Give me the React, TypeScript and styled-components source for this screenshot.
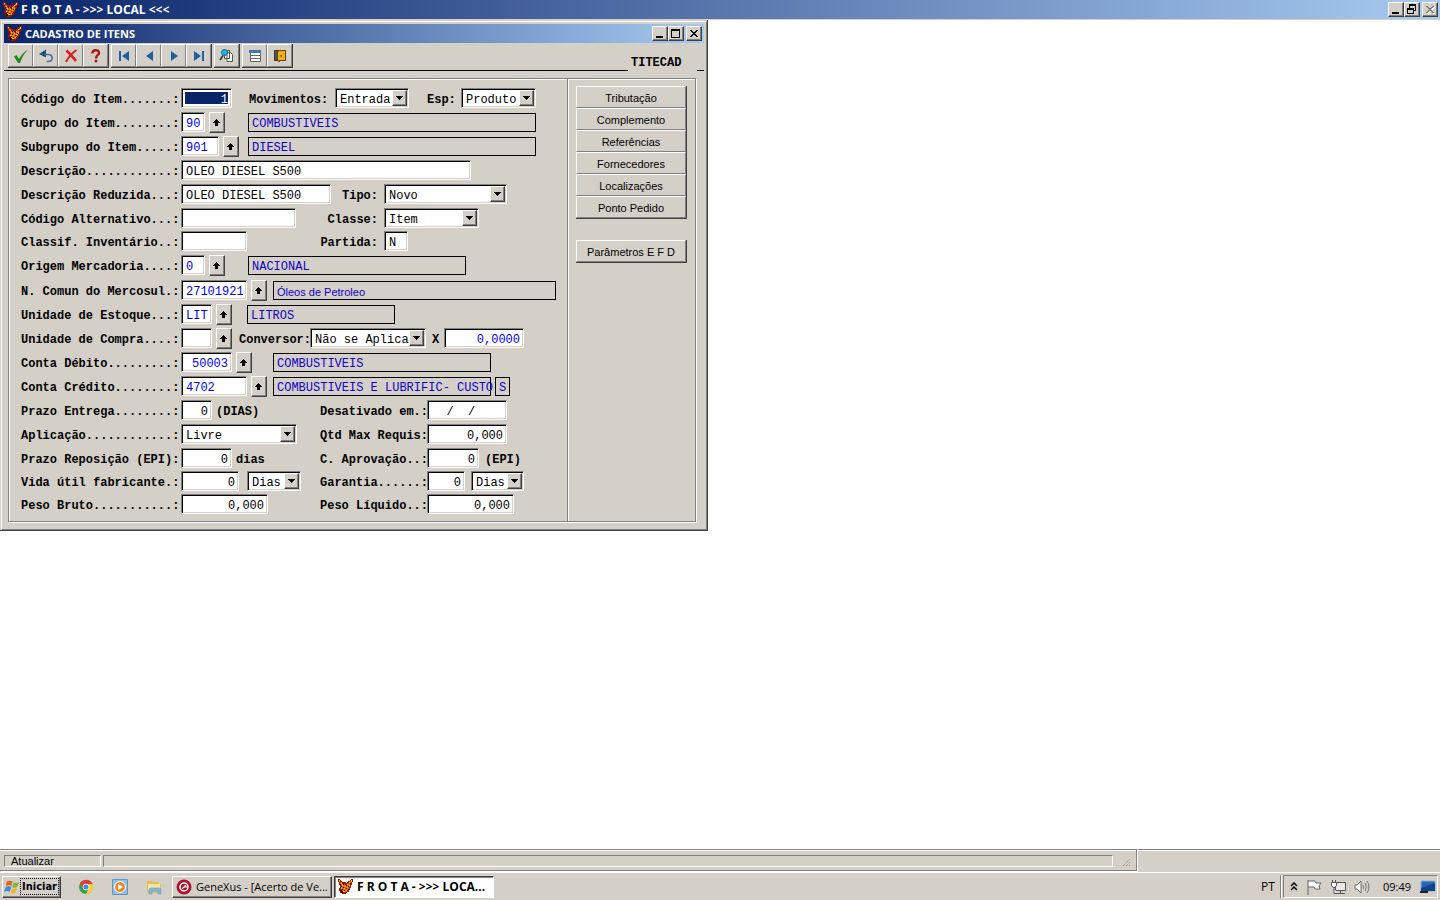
import React from "react";
import styled, { createGlobalStyle, css } from "styled-components";

const face = "#d4d0c8";
const shade = "#808080";
const dark = "#404040";
const mono = '"Liberation Mono", "Courier New", monospace';
const sans = '"Liberation Sans", Arial, sans-serif';
const caption = '"Open Sans", "Noto Sans", sans-serif';

const raised = css`
  border: 1px solid;
  border-color: #fff ${dark} ${dark} #fff;
  box-shadow: inset -1px -1px 0 ${shade};
`;

const GlobalStyle = createGlobalStyle`
  * { box-sizing: border-box; }
  body { margin: 0; background: #fff; color: #000; font: 11px ${sans}; }
  button, input, select { font: inherit; color: inherit; margin: 0; padding: 0; border-radius: 0; }
  button { background: ${face}; }
  svg { flex-shrink: 0; }
`;

const Desktop = styled.div`
  display: flex;
  flex-direction: column;
  min-height: 100vh;
`;

const TitleBar = styled.header<{ $main?: boolean }>`
  display: flex;
  align-items: center;
  gap: 3px;
  height: ${(p) => (p.$main ? 20 : 19)}px;
  padding: 0 2px 0 3px;
  border-bottom: ${(p) => (p.$main ? `1px solid ${face}` : 0)};
  background: linear-gradient(to right, #0a246a, #a6caf0);
  color: #fff;
`;

const Title = styled.h1<{ $small?: boolean }>`
  flex: 1;
  margin: 0;
  font: bold ${(p) => (p.$small ? 11 : 12)}px/18px ${caption};
  white-space: nowrap;
`;

const WindowButtons = styled.div`
  display: flex;
`;

const WindowButton = styled.button<{ $apart?: boolean }>`
  ${raised}
  display: flex;
  align-items: center;
  justify-content: center;
  width: 16px;
  height: 15px;
  margin-left: ${(p) => (p.$apart ? 2 : 0)}px;
`;

const Workspace = styled.main`
  flex: 1;
`;

const Child = styled.section`
  width: fit-content;
  padding: 1px 0 0 1px;
  background: ${face};
  border-right: 1px solid ${dark};
  border-bottom: 1px solid ${dark};
`;

const ChildInner = styled.div`
  padding: 2px;
  border: 1px solid;
  border-color: #fff ${shade} ${shade} #fff;
`;

const ToolStrip = styled.div`
  display: flex;
  height: 28px;
`;

const Tools = styled.div`
  display: flex;
  flex: 1;
  gap: 2px;
  padding: 1px 0 2px 4px;
  border-bottom: 1px solid #000;
`;

const ToolGroup = styled.div`
  display: flex;
  border-right: 1px solid ${dark};
  border-bottom: 1px solid ${dark};
`;

const Tool = styled.button`
  display: flex;
  align-items: center;
  justify-content: center;
  width: 25px;
  height: 23px;
  border: 1px solid;
  border-color: #fff ${shade} ${shade} #fff;
`;

const ProgramName = styled.div`
  width: 69px;
  padding-left: 3px;
  font: bold 12px/41px ${mono};
`;

const StripTail = styled.div`
  width: 7px;
  border-bottom: 1px solid #000;
`;

const Panel = styled.div`
  display: flex;
  margin: 7px 8px 5px 4px;
  border: 1px solid ${shade};
  box-shadow: 1px 1px 0 #fff, inset 1px 1px 0 #fff;
`;

const Form = styled.form`
  width: 558px;
  padding: 9px 0 7px 12px;
  font: 12px ${mono};
`;

const Row = styled.div<{ $cols?: string; $height?: number }>`
  display: grid;
  grid-template-columns: 160px ${(p) => p.$cols ?? "auto"};
  justify-content: start;
  align-items: start;
  height: ${(p) => p.$height ?? 24}px;
`;

const Cell = styled.div<{ $gap?: number; $spread?: boolean }>`
  display: flex;
  gap: ${(p) => p.$gap ?? 4}px;
  justify-content: ${(p) => (p.$spread ? "space-between" : "flex-start")};
  padding-right: ${(p) => (p.$spread ? 6 : 0)}px;
`;

const Label = styled.label`
  font-weight: bold;
  line-height: 24px;
  height: 20px;
  white-space: pre;
`;

const Field = styled.input<{ $w: number; $right?: boolean; $blue?: boolean; $selected?: boolean }>`
  width: ${(p) => p.$w}px;
  height: 20px;
  padding: 4px 3px 0 3px;
  border: 1px solid;
  border-color: ${shade} #fff #fff ${shade};
  outline: 0;
  background: ${(p) => (p.$selected ? "#0a246a" : "#fff")};
  box-shadow: inset 1px 1px 0 #000, inset -1px -1px 0 ${face}${(p) => (p.$selected ? ", inset 0 0 0 3px #fff" : "")};
  color: ${(p) => (p.$selected ? "#fff" : p.$blue ? "#0000f0" : "#000")};
  text-align: ${(p) => (p.$right ? "right" : "left")};
  text-indent: ${(p) => (p.$right ? 0 : 1)}px;
`;

const Readout = styled.output<{ $w: number; $sans?: boolean }>`
  width: ${(p) => p.$w}px;
  height: 19px;
  margin-top: 1px;
  padding-left: 3px;
  border: 1px solid #000;
  color: #1000c8;
  font: ${(p) => (p.$sans ? `11px/20px ${sans}` : `12px/21px ${mono}`)};
  white-space: nowrap;
`;

const LookupButton = styled.button`
  ${raised}
  display: flex;
  align-items: center;
  justify-content: center;
  width: 16px;
  height: 21px;
`;

const ComboFrame = styled.span<{ $w: number }>`
  position: relative;
  display: block;
  width: ${(p) => p.$w}px;
  height: 20px;
  border: 1px solid;
  border-color: ${shade} #fff #fff ${shade};
  background: #fff;
  box-shadow: inset 1px 1px 0 #000, inset -1px -1px 0 ${face};
`;

const ComboSelect = styled.select`
  width: 100%;
  height: 18px;
  padding: 3px 0 0 4px;
  border: 0;
  outline: 0;
  background: transparent;
  appearance: none;
`;

const ComboArrow = styled.span`
  ${raised}
  position: absolute;
  top: 1px;
  right: 1px;
  bottom: 1px;
  display: flex;
  align-items: center;
  justify-content: center;
  width: 15px;
  background: ${face};
  pointer-events: none;
`;

const Side = styled.nav`
  display: flex;
  flex-direction: column;
  gap: 21px;
  width: 128px;
  padding: 7px 8px;
  border-left: 1px solid ${shade};
  box-shadow: inset 1px 1px 0 #fff;
`;

const SideGroup = styled.div`
  display: flex;
  flex-direction: column;
  border-right: 1px solid ${dark};
  border-bottom: 1px solid ${dark};
`;

const SideButton = styled.button`
  height: 22px;
  padding-top: 2px;
  border: 1px solid;
  border-color: #fff ${shade} ${shade} #fff;
  line-height: 18px;
`;

const StatusArea = styled.footer`
  display: flex;
  gap: 1px;
  height: 23px;
  background: ${face};
`;

const StatusBar = styled.div`
  display: flex;
  align-items: center;
  gap: 2px;
  flex: 0 1 1137px;
  height: 22px;
  padding: 2px 4px 0;
  border: 1px solid ${shade};
  border-left: 0;
  box-shadow: inset 0 1px 0 #fff, 1px 1px 0 #fff;
`;

const StatusPane = styled.div<{ $w?: number }>`
  flex: ${(p) => (p.$w ? `0 0 ${p.$w}px` : "1")};
  height: 12px;
  padding-left: 6px;
  border: 1px solid;
  border-color: ${shade} #fff #fff ${shade};
  line-height: 11px;
`;

const Grip = styled.svg`
  width: 17px;
  height: 12px;
`;

const StatusRest = styled.div`
  flex: 1;
  border-top: 1px solid ${shade};
  box-shadow: inset 0 1px 0 #fff;
`;

const TaskBar = styled.footer`
  display: flex;
  align-items: center;
  height: 28px;
  padding: 0 2px;
  border-top: 1px solid #fff;
  background: ${face};
`;

const StartButton = styled.button`
  ${raised}
  display: flex;
  align-items: center;
  width: 59px;
  height: 22px;
  font: bold 11px "DejaVu Sans Condensed", ${caption};
`;

const StartText = styled.span`
  width: 39px;
  border: 1px dotted #000;
  line-height: 15px;
`;

const QuickLaunch = styled.div`
  display: flex;
  gap: 18px;
  width: 111px;
  padding-left: 17px;
`;

const QuickLink = styled.button`
  display: flex;
  width: 16px;
  height: 16px;
  border: 0;
`;

const Tasks = styled.div`
  display: flex;
  flex: 1;
  gap: 2px;
`;

const TaskButton = styled.button<{ $active?: boolean }>`
  ${raised}
  display: flex;
  align-items: center;
  gap: 4px;
  width: 160px;
  height: 22px;
  padding-left: 3px;
  text-align: left;
  white-space: nowrap;
  font: 11px ${caption};
  ${(p) =>
    p.$active &&
    css`
      border-color: ${dark} #fff #fff ${dark};
      box-shadow: inset 1px 1px 0 ${shade};
      background: #fff;
      font-weight: bold;
      font-size: 12px;
    `}
`;

const Language = styled.span`
  width: 19px;
  font: 12px ${caption};
`;

const Tray = styled.div`
  display: flex;
  align-items: center;
  gap: 8px;
  height: 23px;
  margin-left: 1px;
  padding: 0 1px 0 6px;
  border: 1px solid;
  border-color: ${shade} #fff #fff ${shade};
`;

const TrayDivider = styled.div`
  width: 2px;
  height: 23px;
  border-left: 1px solid ${shade};
  border-right: 1px solid #fff;
`;

const Clock = styled.time`
  width: 34px;
  padding-left: 5px;
  font: 11px ${caption};
`;

const Fox = () => (
  <svg width="15" height="15" viewBox="0 0 15 15" shapeRendering="crispEdges" aria-hidden="true">
    <path d="M0 0h2v1h1v1h1v1h4v1h1V3h1V2h2V1h1V0h2v3h-1v3h-1v3h-1v2h-1v2h-2v1H8v1H4v-1H2v-2H1V9H2V6H1V3H0z" fill="#a01400" />
    <path d="M1 1h1v2h2v2h4v1h2V4h2V2h1v3h-1v3h-1v3H9v2H6v-1H4V9H3V6H2V3H1z" fill="#e86408" />
    <path d="M1 1h1v1H1zM3 4h1v1H3zM9 5h1v1H9zM11 3h1v1h-1zM13 1h1v2h-1zM4 6h1v1H4zM7 7h1v1H7zM6 9h1v1H6zM9 8h1v1H9zM8 11h1v1H8zM11 6h1v1h-1zM5 12h2v1H5zM3 9h1v1H3z" fill="#ffd800" />
    <path d="M2 5h1v1H2zM5 5h1v1H5zM3 7h1v1H3zM5 8h1v1H5zM8 6h1v1H8zM7 5h1v1H7zM10 7h1v1h-1zM8 9h1v1H8zM2 11h2v1H2zM4 10h1v1H4zM6 11h1v1H6zM10 10h1v1h-1zM3 12h2v2H3zM12 4h1v1h-1z" fill="#200800" />
  </svg>
);

const MinimizeGlyph = () => (
  <svg width="12" height="11" viewBox="0 0 12 11" aria-hidden="true"><path d="M2 8h7v2H2z" /></svg>
);
const MaximizeGlyph = () => (
  <svg width="12" height="11" viewBox="0 0 12 11" shapeRendering="crispEdges" aria-hidden="true"><path d="M1 1h9v9H1zM2 3v6h7V3z" fillRule="evenodd" /></svg>
);
const RestoreGlyph = () => (
  <svg width="12" height="11" viewBox="0 0 12 11" shapeRendering="crispEdges" aria-hidden="true"><path d="M3 0h7v7H8V6h1V2H4v2H3zM1 4h7v6H1zM2 6v3h5V6z" fillRule="evenodd" /></svg>
);
const crossPath = "M2 2h2v1h1v1h2V3h1V2h2v1H9v1H8v1H7v1h1v1h1v1h1v1H8V8H7V7H5v1H4v1H2V8h1V7h1V6h1V5H4V4H3V3H2z";
const CloseGlyph = ({ disabled }: { disabled?: boolean }) => (
  <svg width="12" height="11" viewBox="0 0 12 11" shapeRendering="crispEdges" aria-hidden="true">
    {disabled && <path d={crossPath} transform="translate(1 1)" fill="#fff" />}
    <path d={crossPath} fill={disabled ? "#808080" : "#000"} />
  </svg>
);

const Icon = ({ children }: { children: React.ReactNode }) => (
  <svg width="16" height="16" viewBox="0 0 16 16" aria-hidden="true">{children}</svg>
);

const toolGroups: { name: string; icon: React.ReactNode }[][] = [
  [
    { name: "Confirmar", icon: <path d="M1 8.500l2.500-1.500L6 11C8 7 11 4 15 1.500 11 6 8.500 10 7 15H5z" fill="#1c8a1c" /> },
    { name: "Desfazer", icon: <><path d="M1 6l7-4.500v8z" fill="#1b4f80" /><path d="M7 6.500h3c5.500 0 5.500 7 0 7H8.500" fill="none" stroke="#4d7296" strokeWidth="1.600" /></> },
    { name: "Excluir", icon: <><path d="M3.500 2.500C7 6 10 9 13 13" stroke="#d92020" strokeWidth="2.600" fill="none" /><path d="M13.500 2C9 5 5.500 9 3 14" stroke="#d92020" strokeWidth="2" fill="none" /></> },
    { name: "Ajuda", icon: <><path d="M4.500 5.500C3.500 1.500 11.500 1 11 5c0 2-3 2-3 5.500" stroke="#a81818" strokeWidth="2.400" fill="none" /><circle cx="8" cy="13" r="1.500" fill="#a81818" /></> },
  ],
  [
    { name: "Primeiro", icon: <path d="M3 3h2v10H3zM13 3v10L6 8z" fill="#1d61a4" /> },
    { name: "Anterior", icon: <path d="M12 3v10L5 8z" fill="#1d61a4" /> },
    { name: "Próximo", icon: <path d="M5 3v10l7-5z" fill="#1d61a4" /> },
    { name: "Último", icon: <path d="M3 3v10l7-5zM11 3h2v10h-2z" fill="#1d61a4" /> },
  ],
  [
    {
      name: "Localizar",
      icon: (
        <>
          <path d="M5.500 2.500h5v8h-5zM8 4.500h3.500l2 2v7H8z" fill="#fff" stroke="#555" />
          <circle cx="5.500" cy="4.500" r="3" fill="#20b4e8" stroke="#106888" />
          <path d="M4 7.500L1 12" stroke="#333" strokeWidth="1.600" />
        </>
      ),
    },
  ],
  [
    {
      name: "Lista",
      icon: (
        <>
          <path d="M3.500 3.500h10v10h-10z" fill="#fff" stroke="#666" />
          <path d="M3 7.500h11M3 10.500h11" stroke="#666" />
          <path d="M2 2h12v3H2z" fill="#3f78b4" />
        </>
      ),
    },
    {
      name: "Sair",
      icon: (
        <>
          <path d="M2.500 2.500h5v10h-5z" fill="#555" stroke="#333" />
          <path d="M5.500 3.500l2-1h6v10h-6v1.500l-2-2z" fill="#f4b010" stroke="#604000" />
          <path d="M8.500 8h1.500" stroke="#503000" strokeWidth="1.500" />
        </>
      ),
    },
  ],
];

const sideGroups = [
  ["Tributação", "Complemento", "Referências", "Fornecedores", "Localizações", "Ponto Pedido"],
  ["Parâmetros E F D"],
];

const Lookup = ({ of }: { of: string }) => (
  <LookupButton type="button" aria-label={`Procurar ${of}`}>
    <svg width="8" height="9" viewBox="0 0 8 9" shapeRendering="crispEdges" aria-hidden="true">
      <path d="M3 1h1v1h1v1h1v1h1v1H5v3H2V5H0V4h1V3h1V2h1z" />
    </svg>
  </LookupButton>
);

const Combo = ({ id, w, value }: { id: string; w: number; value: string }) => (
  <ComboFrame $w={w}>
    <ComboSelect id={id} aria-label={id} defaultValue={value}>
      <option>{value}</option>
    </ComboSelect>
    <ComboArrow>
      <svg width="7" height="4" viewBox="0 0 7 4" shapeRendering="crispEdges" aria-hidden="true">
        <path d="M0 0h7v1H6v1H5v1H4v1H3V3H2V2H1V1H0z" />
      </svg>
    </ComboArrow>
  </ComboFrame>
);

const ItemForm = () => (
  <Form>
    <Row $cols="68px 86px 92px 34px auto">
      <Label htmlFor="codigo">Código do Item.......:</Label>
      <Field id="codigo" $w={51} $right $selected defaultValue="1" />
      <Label htmlFor="movimentos">Movimentos:</Label>
      <Combo id="movimentos" w={74} value="Entrada" />
      <Label htmlFor="esp">Esp:</Label>
      <Combo id="esp" w={75} value="Produto" />
    </Row>
    <Row $cols="67px auto">
      <Label htmlFor="grupo">Grupo do Item........:</Label>
      <Cell><Field id="grupo" $w={24} $blue defaultValue="90" /><Lookup of="grupo" /></Cell>
      <Readout $w={288}>COMBUSTIVEIS</Readout>
    </Row>
    <Row $cols="67px auto">
      <Label htmlFor="subgrupo">Subgrupo do Item.....:</Label>
      <Cell><Field id="subgrupo" $w={38} $blue defaultValue="901" /><Lookup of="subgrupo" /></Cell>
      <Readout $w={288}>DIESEL</Readout>
    </Row>
    <Row>
      <Label htmlFor="descricao">Descrição............:</Label>
      <Field id="descricao" $w={290} defaultValue="OLEO DIESEL S500" />
    </Row>
    <Row $cols="203px auto">
      <Label htmlFor="reduzida">Descrição Reduzida...:</Label>
      <Cell $spread><Field id="reduzida" $w={150} defaultValue="OLEO DIESEL S500" /><Label htmlFor="tipo">Tipo:</Label></Cell>
      <Combo id="tipo" w={123} value="Novo" />
    </Row>
    <Row $cols="203px auto" $height={23}>
      <Label htmlFor="alternativo">Código Alternativo...:</Label>
      <Cell $spread><Field id="alternativo" $w={115} /><Label htmlFor="classe">Classe:</Label></Cell>
      <Combo id="classe" w={95} value="Item" />
    </Row>
    <Row $cols="203px auto">
      <Label htmlFor="inventario">Classif. Inventário..:</Label>
      <Cell $spread><Field id="inventario" $w={66} /><Label htmlFor="partida">Partida:</Label></Cell>
      <Field id="partida" $w={24} defaultValue="N" />
    </Row>
    <Row $cols="67px auto" $height={25}>
      <Label htmlFor="origem">Origem Mercadoria....:</Label>
      <Cell><Field id="origem" $w={24} $blue defaultValue="0" /><Lookup of="origem" /></Cell>
      <Readout $w={218}>NACIONAL</Readout>
    </Row>
    <Row $cols="92px auto">
      <Label htmlFor="ncm">N. Comun do Mercosul.:</Label>
      <Cell><Field id="ncm" $w={66} $blue defaultValue="27101921" /><Lookup of="ncm" /></Cell>
      <Readout $w={283} $sans>Óleos de Petroleo</Readout>
    </Row>
    <Row $cols="66px auto">
      <Label htmlFor="estoque">Unidade de Estoque...:</Label>
      <Cell><Field id="estoque" $w={31} $blue defaultValue="LIT" /><Lookup of="unidade de estoque" /></Cell>
      <Readout $w={148}>LITROS</Readout>
    </Row>
    <Row $cols="58px 71px 122px 12px auto">
      <Label htmlFor="compra">Unidade de Compra....:</Label>
      <Cell><Field id="compra" $w={31} $blue /><Lookup of="unidade de compra" /></Cell>
      <Label htmlFor="conversor">Conversor:</Label>
      <Combo id="conversor" w={116} value="Não se Aplica" />
      <Label htmlFor="fator">X</Label>
      <Field id="fator" $w={80} $right $blue defaultValue="0,0000" />
    </Row>
    <Row $cols="92px auto">
      <Label htmlFor="debito">Conta Débito.........:</Label>
      <Cell><Field id="debito" $w={51} $right $blue defaultValue="50003" /><Lookup of="conta débito" /></Cell>
      <Readout $w={218}>COMBUSTIVEIS</Readout>
    </Row>
    <Row $cols="92px auto">
      <Label htmlFor="credito">Conta Crédito........:</Label>
      <Cell><Field id="credito" $w={66} $blue defaultValue="4702" /><Lookup of="conta crédito" /></Cell>
      <Cell><Readout $w={218}>COMBUSTIVEIS E LUBRIFIC- CUSTO</Readout><Readout $w={15}>S</Readout></Cell>
    </Row>
    <Row $cols="139px 107px auto">
      <Label htmlFor="entrega">Prazo Entrega........:</Label>
      <Cell><Field id="entrega" $w={31} $right defaultValue="0" /><Label as="span">(DIAS)</Label></Cell>
      <Label htmlFor="desativado">Desativado em.:</Label>
      <Field id="desativado" $w={80} defaultValue="  /  /" />
    </Row>
    <Row $cols="139px 107px auto">
      <Label htmlFor="aplicacao">Aplicação............:</Label>
      <Combo id="aplicacao" w={116} value="Livre" />
      <Label htmlFor="requis">Qtd Max Requis:</Label>
      <Field id="requis" $w={80} $right defaultValue="0,000" />
    </Row>
    <Row $cols="139px 107px auto" $height={23}>
      <Label htmlFor="reposicao">Prazo Reposição (EPI):</Label>
      <Cell><Field id="reposicao" $w={51} $right defaultValue="0" /><Label as="span">dias</Label></Cell>
      <Label htmlFor="aprovacao">C. Aprovação..:</Label>
      <Cell $gap={6}><Field id="aprovacao" $w={52} $right defaultValue="0" /><Label as="span">(EPI)</Label></Cell>
    </Row>
    <Row $cols="139px 107px auto" $height={23}>
      <Label htmlFor="vida">Vida útil fabricante.:</Label>
      <Cell $gap={8}><Field id="vida" $w={58} $right defaultValue="0" /><Combo id="vida-unidade" w={54} value="Dias" /></Cell>
      <Label htmlFor="garantia">Garantia......:</Label>
      <Cell $gap={6}><Field id="garantia" $w={38} $right defaultValue="0" /><Combo id="garantia-unidade" w={53} value="Dias" /></Cell>
    </Row>
    <Row $cols="139px 107px auto" $height={20}>
      <Label htmlFor="bruto">Peso Bruto...........:</Label>
      <Field id="bruto" $w={87} $right defaultValue="0,000" />
      <Label htmlFor="liquido">Peso Líquido..:</Label>
      <Field id="liquido" $w={87} $right defaultValue="0,000" />
    </Row>
  </Form>
);

export default function App() {
  return (
    <Desktop>
      <GlobalStyle />
      <TitleBar $main>
        <Fox />
        <Title>F R O T A - &gt;&gt;&gt; LOCAL &lt;&lt;&lt;</Title>
        <WindowButtons>
          <WindowButton aria-label="Minimizar"><MinimizeGlyph /></WindowButton>
          <WindowButton aria-label="Restaurar"><RestoreGlyph /></WindowButton>
          <WindowButton aria-label="Fechar" $apart disabled><CloseGlyph disabled /></WindowButton>
        </WindowButtons>
      </TitleBar>
      <Workspace>
        <Child>
          <ChildInner>
            <TitleBar>
              <Fox />
              <Title as="h2" $small>CADASTRO DE ITENS</Title>
              <WindowButtons>
                <WindowButton aria-label="Minimizar"><MinimizeGlyph /></WindowButton>
                <WindowButton aria-label="Maximizar"><MaximizeGlyph /></WindowButton>
                <WindowButton aria-label="Fechar" $apart><CloseGlyph /></WindowButton>
              </WindowButtons>
            </TitleBar>
            <ToolStrip>
              <Tools>
                {toolGroups.map((group) => (
                  <ToolGroup key={group[0].name}>
                    {group.map((tool) => (
                      <Tool key={tool.name} type="button" aria-label={tool.name}>
                        <Icon>{tool.icon}</Icon>
                      </Tool>
                    ))}
                  </ToolGroup>
                ))}
              </Tools>
              <ProgramName>TITECAD</ProgramName>
              <StripTail />
            </ToolStrip>
            <Panel>
              <ItemForm />
              <Side>
                {sideGroups.map((group) => (
                  <SideGroup key={group[0]}>
                    {group.map((name) => (
                      <SideButton key={name} type="button">{name}</SideButton>
                    ))}
                  </SideGroup>
                ))}
              </Side>
            </Panel>
          </ChildInner>
        </Child>
      </Workspace>
      <StatusArea>
        <StatusBar>
          <StatusPane $w={97}>Atualizar</StatusPane>
          <StatusPane />
          <Grip viewBox="3 0 17 12" aria-hidden="true">
            <path d="M11 11l7-7M14 11l4-4M17 11l1-1" stroke="#808080" strokeDasharray="1 1" />
          </Grip>
        </StatusBar>
        <StatusRest />
      </StatusArea>
      <TaskBar>
        <StartButton>
          <svg width="17" height="16" viewBox="0 0 18 16" aria-hidden="true">
            <path d="M4 2c2-1 4-1 6 0L9 7C7 6 5 6 3 7z" fill="#e8622a" />
            <path d="M11 3c2 1 4 1 6 0l-2 5c-2 1-4 1-5 0z" fill="#7db83a" />
            <path d="M3 8c2-1 4-1 6 0l-2 5c-2-1-4-1-6 0z" fill="#3c8ad0" />
            <path d="M10 9c1 1 3 1 5 0l-2 5c-2 1-4 1-5 0z" fill="#f0b428" />
          </svg>
          <StartText>Iniciar</StartText>
        </StartButton>
        <QuickLaunch>
          <QuickLink aria-label="Chrome">
            <Icon>
              <circle cx="8" cy="8" r="7" fill="#35a04b" />
              <path d="M2 4.500A7 7 0 0 1 14.600 5H8L5 9z" fill="#dd4032" />
              <path d="M14.600 5A7 7 0 0 1 8 15l3-6V5z" fill="#f8cf3c" />
              <circle cx="8" cy="8" r="3.300" fill="#fff" />
              <circle cx="8" cy="8" r="2.500" fill="#4388e8" />
            </Icon>
          </QuickLink>
          <QuickLink aria-label="Media Player">
            <Icon>
              <path d="M.5 .5h15v15H.5z" fill="#8fc0e8" stroke="#5a98cc" />
              <circle cx="8" cy="8" r="5.500" fill="#f08a1c" stroke="#fff" />
              <path d="M6 5v6l5-3z" fill="#fff" />
            </Icon>
          </QuickLink>
          <QuickLink aria-label="Explorer">
            <Icon>
              <path d="M1 2h5l1 1h6v2h2v9H1z" fill="#e4bc58" />
              <path d="M2 5h12v6H2z" fill="#f8e49a" />
              <path d="M3 15v-4q0-2 2-2h8q2 0 2 2v4h-3v-3H6v3z" fill="#7fb8e0" stroke="#5a98c8" strokeWidth=".5" />
            </Icon>
          </QuickLink>
        </QuickLaunch>
        <Tasks>
          <TaskButton>
            <Icon>
              <circle cx="8" cy="8" r="7.500" fill="#b01030" />
              <circle cx="8" cy="8" r="4" fill="none" stroke="#fff" strokeWidth="1.500" />
              <path d="M6 10l4-4M8 8h3" stroke="#fff" strokeWidth="1.200" />
            </Icon>
            GeneXus - [Acerto de Ve...
          </TaskButton>
          <TaskButton $active>
            <Fox />
            F R O T A - &gt;&gt;&gt; LOCA...
          </TaskButton>
        </Tasks>
        <Language>PT</Language>
        <TrayDivider />
        <Tray>
          <svg width="8" height="10" viewBox="0 0 8 10" aria-hidden="true">
            <path d="M1 4l3-3 3 3M1 8l3-3 3 3" fill="none" stroke="#000" strokeWidth="1.500" />
          </svg>
          <Icon>
            <path d="M2 1v15M2 2h7l1 2h5l-2 3 1 3H9L8 8H2" fill="#fff" stroke="#666" />
          </Icon>
          <Icon>
            <path d="M5.500 3.500h10v8h-10zM7 14.500h8M10.500 12v2" fill="#e8e8e8" stroke="#555" />
            <path d="M1.500 3.500h5v3l-1.500 2h-2l-1.500-2zM4 9v5.500h3M2.500 1v2M5.500 1v2" fill="#fff" stroke="#555" />
          </Icon>
          <Icon>
            <path d="M1 6h2l4-4v12l-4-4H1z" fill="#fff" stroke="#666" />
            <path d="M9 6q1 2 0 4M11 4q3 4 0 8M13 2q4 6 0 12" fill="none" stroke="#777" />
          </Icon>
          <Clock>09:49</Clock>
          <Icon>
            <path d="M1 2h14v10H1z" fill="#2466b8" stroke="#8fb0d0" />
            <path d="M1 9l14-5v8H1z" fill="#124488" />
            <path d="M0 13h8" stroke="#222" strokeWidth="2" />
          </Icon>
        </Tray>
      </TaskBar>
    </Desktop>
  );
}
